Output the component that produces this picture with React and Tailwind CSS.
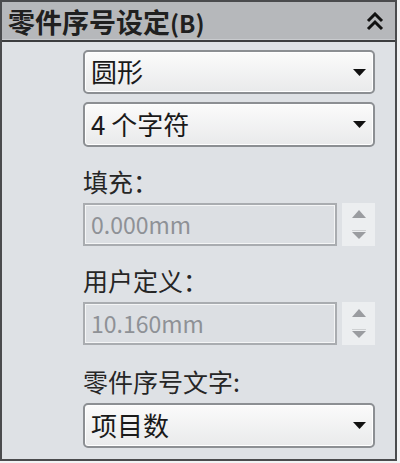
import React from "react";

const font = { fontFamily: '"Segoe UI", "Noto Sans CJK SC", "Noto Sans", sans-serif' };

const Caret = () => (
  <svg width="13" height="7" viewBox="0 0 13 7" className="shrink-0">
    <path d="M0 0 L13 0 L6.5 7 Z" fill="#111" />
  </svg>
);

const Select = ({ value, className = "" }) => (
  <div
    className={`flex items-center justify-between rounded-[5px] border-2 border-[#8c8f93] bg-gradient-to-b from-[#fbfbfb] to-[#e9eaeb] pl-[6px] pr-[7px] text-[26px] leading-none text-[#1a1a1a] shadow-[inset_0_0_0_1px_#ffffff] ${className}`}
  >
    <span className="-mt-[2px]">{value}</span>
    <Caret />
  </div>
);

const Spinner = () => (
  <div className="flex w-[33px] flex-col items-center justify-center gap-[12px] bg-[#eceef0]">
    <svg width="14" height="8" viewBox="0 0 14 8">
      <path d="M0 8 L7 0 L14 8 Z" fill="#9a9ca0" />
    </svg>
    <svg width="14" height="9" viewBox="0 0 14 9">
      <path d="M0 0 L14 0" stroke="#c4c6c9" strokeWidth="1.5" />
      <path d="M0 2 L14 2 L7 9 Z" fill="#9a9ca0" />
    </svg>
  </div>
);

const NumberField = ({ value, className = "" }) => (
  <div className={`flex h-[43px] gap-[5px] ${className}`}>
    <div className="flex flex-1 items-center border-2 border-[#a9acb0] bg-[#dcdfe3] pl-[6px] text-[23px] leading-none text-[#8e9196] shadow-[inset_0_0_0_1px_#f4f5f6]">
      {value}
    </div>
    <Spinner />
  </div>
);

const Label = ({ children, className = "" }) => (
  <div className={`text-[25px] leading-none text-[#262626] ${className}`}>{children}</div>
);

export default function App() {
  return (
    <div className="h-[463px] w-[400px] bg-[#f2f3f4]" style={font}>
      <div className="flex h-[461px] w-[397px] flex-col border-2 border-[#4a4b4d] bg-[#dee1e5]">
        <div className="flex h-[40px] items-center justify-between border-b-2 border-[#3c3d3f] bg-[#b6b8bb] pl-[6px] pr-[11px] shadow-[inset_0_-1px_0_#c9cbce]">
          <span className="text-[27px] font-bold leading-none text-[#202020]">
            零件序号设定<span className="text-[24px]">(B)</span>
          </span>
          <svg width="18" height="19" viewBox="0 0 18 19">
            <path d="M2 9 L9 2 L16 9" fill="none" stroke="#111" strokeWidth="3" />
            <path d="M2 17 L9 10 L16 17" fill="none" stroke="#111" strokeWidth="3" />
          </svg>
        </div>
        <div className="flex flex-col pl-[81px] pr-[20px]">
          <Select value="圆形" className="mt-[8px] h-[44px]" />
          <Select value="4 个字符" className="mt-[8px] h-[45px]" />
          <Label className="mt-[22px]">填充：</Label>
          <NumberField value="0.000mm" className="mt-[9px]" />
          <Label className="mt-[22px]">用户定义：</Label>
          <NumberField value="10.160mm" className="mt-[9px]" />
          <Label className="mt-[24px]">零件序号文字:</Label>
          <Select value="项目数" className="mt-[9px] h-[45px]" />
        </div>
      </div>
    </div>
  );
}
